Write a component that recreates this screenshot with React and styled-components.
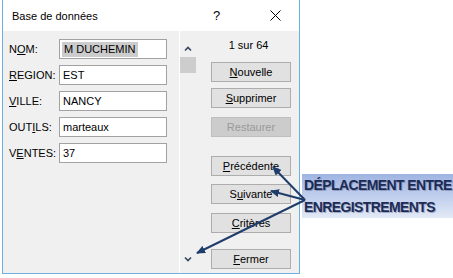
import React from "react";
import styled, { createGlobalStyle } from "styled-components";

const GlobalStyle = createGlobalStyle`
  html, body {
    margin: 0;
    padding: 0;
    background: #ffffff;
  }
  body {
    font-family: "Liberation Sans", Arial, sans-serif;
    font-size: 11px;
    color: #000;
  }
`;

const Styled = {
  Page: styled.div`
    position: relative;
    width: 453px;
    height: 278px;
    display: flex;
    align-items: flex-start;
    padding-left: 2px;
    box-sizing: border-box;
    overflow: hidden;
  `,
  Dialog: styled.div`
    width: 298px;
    height: 274px;
    box-sizing: border-box;
    border: 1px solid #6cb0e0;
    border-top: none;
    display: flex;
    flex-direction: column;
    background: #f0f0f0;
  `,
  TitleBar: styled.div`
    height: 31px;
    flex-shrink: 0;
    background: #ffffff;
    display: flex;
    align-items: center;
    padding-left: 9px;
    padding-right: 18px;
    font-size: 11px;
  `,
  Title: styled.div`
    flex: 1;
    padding-top: 1px;
  `,
  Help: styled.span`
    font-size: 13px;
    width: 8px;
    margin-right: 49px;
  `,
  Body: styled.div`
    flex: 1;
    display: flex;
  `,
  FormPane: styled.div`
    width: 176px;
    box-sizing: border-box;
    padding: 8px 0 0 6px;
    display: grid;
    grid-template-columns: 50px 108px;
    grid-auto-rows: 20px;
    row-gap: 6px;
    align-content: start;
    align-items: center;
  `,
  Label: styled.div`
    white-space: nowrap;
  `,
  Key: styled.span`
    text-decoration: underline;
    text-underline-offset: 1px;
  `,
  Field: styled.div`
    height: 20px;
    box-sizing: border-box;
    border: 1px solid #a2a2a2;
    background: #ffffff;
    display: flex;
    align-items: center;
    padding-left: ${(p) => (p.$selected ? "2px" : "3px")};
    white-space: nowrap;
  `,
  Selection: styled.span`
    background: #cccccc;
    padding: 1px 2px;
    line-height: 13px;
  `,
  Divider: styled.div`
    width: 1px;
    background: #ffffff;
  `,
  ScrollCol: styled.div`
    width: 16px;
    display: flex;
    flex-direction: column;
    align-items: center;
    padding: 15px 0 11px;
    box-sizing: border-box;
  `,
  Thumb: styled.div`
    width: 16px;
    height: 16px;
    margin-top: 5px;
    background: #cdcdcd;
  `,
  Spacer: styled.div`
    flex: 1;
  `,
  ButtonCol: styled.div`
    display: flex;
    flex-direction: column;
    padding: 7px 0 0 15px;
  `,
  Count: styled.div`
    width: 80px;
    height: 15px;
    line-height: 15px;
    text-align: center;
    padding-right: 5px;
    box-sizing: border-box;
  `,
  Button: styled.div`
    width: 80px;
    height: 20px;
    box-sizing: border-box;
    margin-top: ${(p) => p.$mt}px;
    border: 1px solid ${(p) => (p.$disabled ? "#bfbfbf" : "#adadad")};
    background: ${(p) => (p.$disabled ? "#cccccc" : "#e1e1e1")};
    color: ${(p) => (p.$disabled ? "#9a9a9a" : "#000")};
    display: flex;
    align-items: center;
    justify-content: center;
  `,
  Callout: styled.div`
    margin: 174px 0 0 2px;
    width: 151px;
    height: 44px;
    box-sizing: border-box;
    padding-left: 2px;
    background: linear-gradient(180deg, #9fb4e2 0%, #c3d1ee 55%, #e3e9f6 100%);
    font-size: 14px;
    font-weight: bold;
    line-height: 22px;
    letter-spacing: -0.6px;
    color: #1c2b55;
    text-shadow: 1px 1px 0 rgba(110, 120, 150, 0.55);
    white-space: nowrap;
  `,
  Arrows: styled.svg`
    position: absolute;
    left: 0;
    top: 0;
    pointer-events: none;
  `,
};

const Chevron = ({ down }) => (
  <svg width="8" height="6" viewBox="0 0 8 6">
    <path
      d={down ? "M1 1.5 L4 4.5 L7 1.5" : "M1 4.5 L4 1.5 L7 4.5"}
      fill="none"
      stroke="#34465f"
      strokeWidth="1.6"
    />
  </svg>
);

const CloseIcon = () => (
  <svg width="11" height="11" viewBox="0 0 11 11">
    <path d="M0.5 0.5 L10.5 10.5 M10.5 0.5 L0.5 10.5" stroke="#000" strokeWidth="1" />
  </svg>
);

const fields = [
  { label: ["N", "O", "M:"], value: "M DUCHEMIN", selected: true },
  { label: ["", "R", "EGION:"], value: "EST" },
  { label: ["", "V", "ILLE:"], value: "NANCY" },
  { label: ["OUT", "I", "LS:"], value: "marteaux" },
  { label: ["V", "E", "NTES:"], value: "37" },
];

const buttons = [
  { label: ["", "N", "ouvelle"], mt: 9 },
  { label: ["", "S", "upprimer"], mt: 6 },
  { label: ["Restaurer", "", ""], mt: 9, disabled: true },
  { label: ["", "P", "récédente"], mt: 19 },
  { label: ["S", "u", "ivante"], mt: 8 },
  { label: ["", "C", "ritères"], mt: 9 },
  { label: ["", "F", "ermer"], mt: 16 },
];

const ArrowLines = () => (
  <Styled.Arrows width="453" height="278" viewBox="0 0 453 278">
    <defs>
      <marker
        id="head"
        markerUnits="userSpaceOnUse"
        markerWidth="9"
        markerHeight="8"
        refX="8"
        refY="4"
        orient="auto"
      >
        <path d="M0 0 L9 4 L0 8 Z" fill="#1f3c6b" />
      </marker>
    </defs>
    <g stroke="#1f3c6b" strokeWidth="2" fill="none">
      <line x1="305" y1="200" x2="273" y2="167" markerEnd="url(#head)" />
      <line x1="305" y1="200" x2="271" y2="191" markerEnd="url(#head)" />
      <line x1="305" y1="200" x2="197" y2="253" markerEnd="url(#head)" />
    </g>
  </Styled.Arrows>
);

const App = () => {
  return (
    <>
      <GlobalStyle />
      <Styled.Page>
        <Styled.Dialog>
          <Styled.TitleBar>
            <Styled.Title>Base de données</Styled.Title>
            <Styled.Help>?</Styled.Help>
            <CloseIcon />
          </Styled.TitleBar>
          <Styled.Body>
            <Styled.FormPane>
              {fields.map((f) => (
                <React.Fragment key={f.value}>
                  <Styled.Label>
                    {f.label[0]}
                    <Styled.Key>{f.label[1]}</Styled.Key>
                    {f.label[2]}
                  </Styled.Label>
                  <Styled.Field $selected={f.selected}>
                    {f.selected ? <Styled.Selection>{f.value}</Styled.Selection> : f.value}
                  </Styled.Field>
                </React.Fragment>
              ))}
            </Styled.FormPane>
            <Styled.Divider />
            <Styled.ScrollCol>
              <Chevron />
              <Styled.Thumb />
              <Styled.Spacer />
              <Chevron down />
            </Styled.ScrollCol>
            <Styled.ButtonCol>
              <Styled.Count>1 sur 64</Styled.Count>
              {buttons.map((b) => (
                <Styled.Button key={b.label.join("")} $mt={b.mt} $disabled={b.disabled}>
                  {b.label[0]}
                  {b.label[1] && <Styled.Key>{b.label[1]}</Styled.Key>}
                  {b.label[2]}
                </Styled.Button>
              ))}
            </Styled.ButtonCol>
          </Styled.Body>
        </Styled.Dialog>
        <Styled.Callout>
          DÉPLACEMENT ENTRE
          <br />
          ENREGISTREMENTS
        </Styled.Callout>
        <ArrowLines />
      </Styled.Page>
    </>
  );
};

export default App;
